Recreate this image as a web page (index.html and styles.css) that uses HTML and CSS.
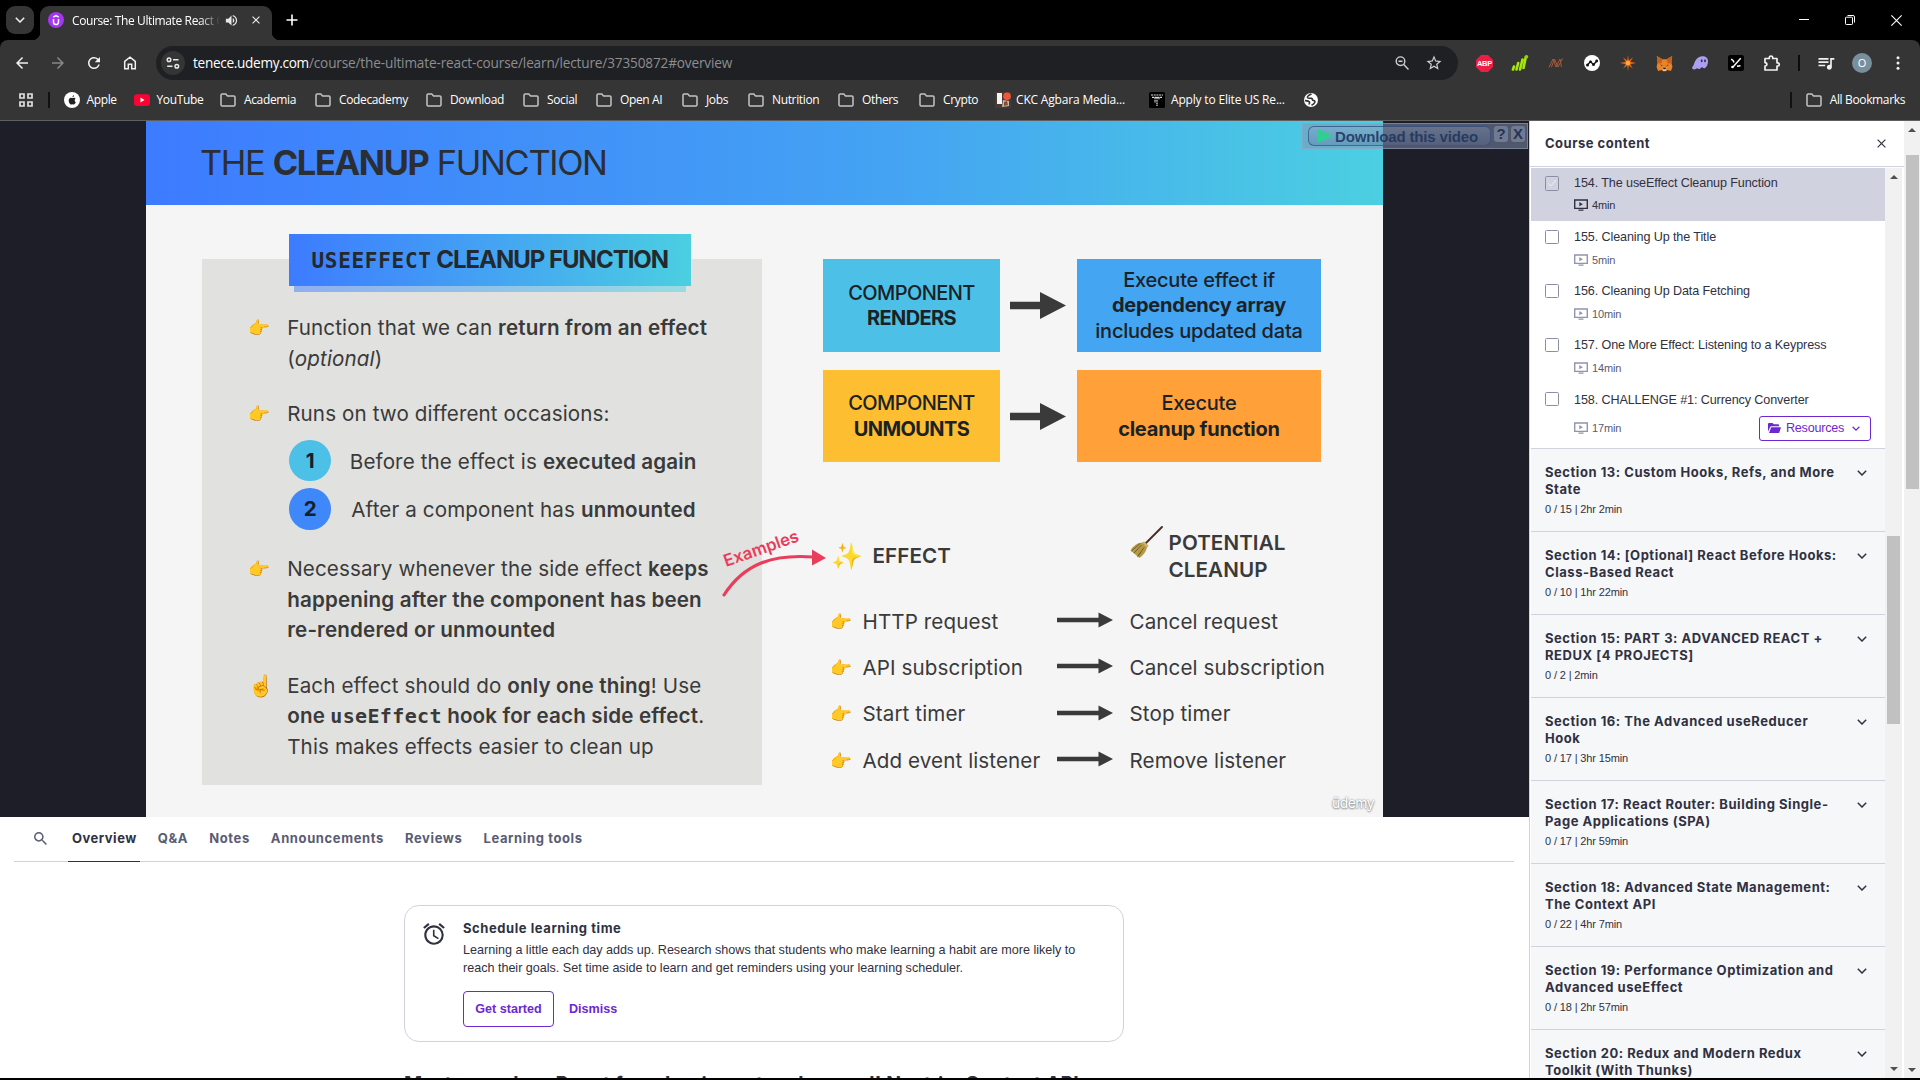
FILE: index.html
```html
<!DOCTYPE html>
<html lang="en">
<head>
<meta charset="utf-8">
<title>Course: The Ultimate React Course</title>
<link rel="stylesheet" href="styles.css">
</head>
<body>
<svg class="defs" aria-hidden="true">
  <symbol id="folder" viewBox="0 0 16 16"><path d="M1 3.2c0-.7.5-1.2 1.2-1.2h3.6l1.7 1.9h6.3c.7 0 1.2.5 1.2 1.2v7.7c0 .7-.5 1.2-1.2 1.2H2.2c-.7 0-1.2-.5-1.2-1.2z" fill="none" stroke="#c3c3c3" stroke-width="1.5"/></symbol>
  <symbol id="play" viewBox="0 0 14 12"><path d="M.7 1h12.6v8.4H.7zM4.5 11.1h5" fill="none" stroke="currentColor" stroke-width="1.4"/><path d="M5.3 3.1v4.2l3.6-2.1z" fill="currentColor"/></symbol>
  <symbol id="chev" viewBox="0 0 10 6"><path d="M.8.8L5 5 9.200.8" fill="none" stroke="currentColor" stroke-width="1.5"/></symbol>
  <symbol id="block-arrow" viewBox="0 0 56 27"><path d="M0 9.700h30V0l26 13.500L30 27v-9.700H0z" fill="#3a3a3a"/></symbol>
  <symbol id="thin-arrow" viewBox="0 0 56 16"><path d="M0 5.700h41.500V.5L56 8 41.500 15.500v-5.200H0z" fill="#3a3a3a"/></symbol>
  <symbol id="close" viewBox="0 0 10 10"><path d="M.7.7l8.600 8.600M9.300.7L.7 9.300" fill="none" stroke="currentColor" stroke-width="1.300"/></symbol>
</svg>

<header class="tabstrip">
  <button class="tab-search"><svg width="10" height="6"><use href="#chev"/></svg></button>
  <div class="tab">
    <svg class="favicon" viewBox="0 0 16 16" width="16" height="16"><circle cx="8" cy="8" r="8" fill="#a435f0"/><path d="M5.500 7v3.100a2.500 2.500 0 0 0 5 0V7M5.300 5.200L8 3.600l2.700 1.600" fill="none" stroke="#fff" stroke-width="1.500"/></svg>
    <span class="tab-title">Course: The Ultimate React C</span>
    <svg class="speaker" viewBox="0 0 24 24" width="15" height="15"><path fill="#e8e8e8" d="M3 9v6h4l5 5V4L7 9H3zm13.500 3c0-1.770-1.020-3.290-2.500-4.030v8.050c1.480-.73 2.500-2.250 2.500-4.020zM14 3.230v2.060c2.890.86 5 3.540 5 6.710s-2.110 5.850-5 6.710v2.060c4.010-.91 7-4.490 7-8.770s-2.990-7.860-7-8.770z"/></svg>
    <svg class="tab-close" width="8" height="8"><use href="#close"/></svg>
  </div>
  <svg class="plus" viewBox="0 0 12 12" width="12" height="12"><path d="M6 .5v11M.5 6h11" stroke="#fff" stroke-width="1.600"/></svg>
  <div class="win">
    <svg viewBox="0 0 10 10" width="10" height="10"><path d="M0 4.500h10" stroke="#fff"/></svg>
    <svg viewBox="0 0 10 10" width="10" height="10"><path d="M.5 3a.8.8 0 0 1 .8-.8h5.400a.8.8 0 0 1 .8.8v5.700a.8.8 0 0 1-.8.8H1.300a.8.8 0 0 1-.8-.8zM2.500.5h5.500a1.500 1.500 0 0 1 1.500 1.500v5.500" fill="none" stroke="#fff"/></svg>
    <svg viewBox="0 0 10 10" width="11" height="11"><path d="M.3.3l9.400 9.400M9.700.3L.3 9.700" stroke="#fff"/></svg>
  </div>
</header>

<nav class="toolbar">
  <div class="cells">
    <i><svg viewBox="0 0 24 24" width="18" height="18"><path fill="#f1f1f1" d="M20 11H7.830l5.590-5.590L12 4l-8 8 8 8 1.410-1.410L7.830 13H20v-2z"/></svg></i>
    <i><svg viewBox="0 0 24 24" width="18" height="18"><path fill="#868686" d="M12 4l-1.410 1.410L16.170 11H4v2h12.170l-5.580 5.590L12 20l8-8z"/></svg></i>
    <i><svg viewBox="0 0 24 24" width="18" height="18"><path fill="#f1f1f1" d="M17.650 6.350A7.958 7.958 0 0 0 12 4c-4.420 0-7.990 3.580-7.990 8s3.570 8 7.990 8c3.730 0 6.840-2.550 7.730-6h-2.080A5.990 5.990 0 0 1 12 18c-3.310 0-6-2.690-6-6s2.690-6 6-6c1.660 0 3.140.69 4.220 1.780L13 11h7V4l-2.350 2.350z"/></svg></i>
    <i><svg viewBox="0 0 16 16" width="16" height="16"><path d="M2.700 6.300L8 2.200l5.300 4.100v7.500h-3.600V9.300H6.300v4.500H2.700z" fill="none" stroke="#f1f1f1" stroke-width="1.500"/></svg></i>
  </div>
  <div class="address">
    <span class="site"><svg viewBox="0 0 14 12" width="14" height="12"><g fill="none" stroke="#e8e8e8" stroke-width="1.500"><circle cx="3" cy="2.700" r="1.800"/><path d="M7 2.700h5.500M1.200 9.300h5.300"/><circle cx="10.800" cy="9.300" r="1.800"/></g></svg></span>
    <span class="url"><b>tenece.udemy.com</b><span>/course/the-ultimate-react-course/learn/lecture/37350872#overview</span></span>
    <svg class="mag" viewBox="0 0 16 16" width="16" height="16"><g fill="none" stroke="#cfcfcf" stroke-width="1.400"><circle cx="6.500" cy="6.200" r="4.300"/><path d="M9.700 9.500l4.800 4.900M4.500 6.200h4"/></g></svg>
    <svg viewBox="0 0 24 24" width="18" height="18"><path fill="#cfcfcf" d="M22 9.240l-7.190-.62L12 2 9.190 8.630 2 9.240l5.460 4.730L5.820 21 12 17.270 18.180 21l-1.630-7.030L22 9.240zM12 15.400l-3.760 2.270 1-4.280-3.320-2.880 4.380-.38L12 6.100l1.710 4.040 4.380.38-3.320 2.880 1 4.280L12 15.400z"/></svg>
  </div>
  <div class="cells ext">
    <i><svg viewBox="0 0 17 17" width="17" height="17"><path d="M5 0h7l5 5v7l-5 5H5l-5-5V5z" fill="#ed1e45"/><text x="8.500" y="11.300" text-anchor="middle">ABP</text></svg></i>
    <i><svg viewBox="0 0 18 18" width="18" height="18"><path d="M2 15.500l1-3M5.500 15.500l1.700-6.500M9 15.500l2.500-10M12.500 14l2.300-11" stroke="#a6e80c" stroke-width="2.600" stroke-linecap="round"/><circle cx="15.500" cy="2.700" r="1.800" fill="#8fd400"/></svg></i>
    <i><svg viewBox="0 0 16 16" width="16" height="16"><path d="M1 12.500L5 4l3 8 4-8 1.500 8M3.500 12L6.500 4l3.500 8 4.500-8.500" fill="none" stroke="#a8583a" stroke-width="1"/></svg></i>
    <i><svg viewBox="0 0 16 16" width="16" height="16"><circle cx="8" cy="8" r="8" fill="#fff"/><path d="M3.500 10l3-3.500 3 3.200 3.200-3.700" fill="none" stroke="#111" stroke-width="1.300"/><g fill="#111"><circle cx="3.500" cy="10" r="1.500"/><circle cx="6.500" cy="6.700" r="1.300"/><circle cx="9.500" cy="9.700" r="1.400"/><circle cx="12.700" cy="6" r="1.400"/></g></svg></i>
    <i><svg viewBox="0 0 16 16" width="16" height="16"><path d="M8 0l.8 5.500 4.300-3.200L10.300 6.800 16 8l-5.700 1.200 2.600 4.400L8.800 10.500 8 16l-.8-5.500-4.100 3.100 2.600-4.400L0 8l5.700-1.200-2.800-4.500L7.200 5.500z" fill="#e5641c"/><circle cx="8" cy="8" r="2.300" fill="#ffb030"/></svg></i>
    <i><svg viewBox="0 0 16 16" width="17" height="17"><path d="M.8 1l5.200 3h4l5.200-3-.6 6.700.9 3.300-1.400 4-3.600-1-1 1.300h-3L5.500 14l-3.600 1L.5 11l.9-3.300z" fill="#e8832a"/><path d="M.8 1l5.200 3-1 4-3.600-.3zM15.200 1L10 4l1 4 3.600-.3z" fill="#c65f1b"/><path d="M4 9l2 .7-.3 1zM12 9l-2 .7.300 1z" fill="#2b2b35"/><path d="M6.300 12.600h3.400l-.3 2.300H6.600z" fill="#d9d9de"/><path d="M7 12h2l.3 1.500H6.700z" fill="#222"/></svg></i>
    <i><svg viewBox="0 0 16 16" width="16" height="16"><path d="M0 12.500C1.500 11 2 8.500 3.200 6 4.700 2.800 7.500 1.200 10.800 1.200c3.400 0 5.200 2.100 5.200 5.200 0 3.700-2 6.800-4 6.800-1 0-1-.9-1.900-.9-1.100 0-1.500 1.700-3.100 1.700-1 0-1-.8-1.800-.8-.9 0-1.600 1.200-3 1.200C.9 14.400 0 13.500 0 12.500z" fill="#ab9ff2"/><ellipse cx="9.700" cy="5.700" rx=".9" ry="1.500" fill="#353045"/><ellipse cx="13" cy="5.700" rx=".9" ry="1.500" fill="#353045"/></svg></i>
    <i><svg viewBox="0 0 16 16" width="16" height="16"><rect width="16" height="16" rx="2.500" fill="#000"/><path d="M3 4.200c2 .3 2.500 1.500 3 3.300M12.700 3.300L5 12M9 11.200l3.500-.4" stroke="#fff" stroke-width="1.400" fill="none"/><circle cx="4.500" cy="12" r="1.300" fill="#fff"/></svg></i>
    <i><svg viewBox="0 0 18 18" width="18" height="18"><path d="M2 4.500h4.300v-.8a1.700 1.700 0 0 1 3.400 0v.8H14v4.300h.7a1.600 1.600 0 0 1 0 3.200H14v4H2v-4c2.500 0 2.500-3.400 0-3.400z" fill="none" stroke="#f1f1f1" stroke-width="1.700" stroke-linejoin="round"/></svg></i>
    <i class="bar"></i>
    <i><svg viewBox="0 0 24 24" width="20" height="20"><path fill="#f1f1f1" d="M15 6H3v2h12V6zm0 4H3v2h12v-2zM3 16h8v-2H3v2zM17 6v8.180c-.31-.11-.65-.18-1-.18-1.660 0-3 1.340-3 3s1.340 3 3 3 3-1.340 3-3V8h3V6h-5z"/></svg></i>
    <i><span class="avatar">O</span></i>
    <i><svg viewBox="0 0 4 16" width="4" height="16" fill="#f1f1f1"><circle cx="2" cy="2.800" r="1.500"/><circle cx="2" cy="8" r="1.500"/><circle cx="2" cy="13.200" r="1.500"/></svg></i>
  </div>
</nav>

<nav class="bookmarks">
  <svg class="apps" viewBox="0 0 14 14" width="14" height="14"><path d="M1 1h4v4H1zM9 1h4v4H9zM1 9h4v4H1zM9 9h4v4H9z" fill="none" stroke="#e0e0e0" stroke-width="1.700"/></svg>
  <span class="sep"></span>
  <ul class="marks">
    <li class="first"><svg viewBox="0 0 16 16"><circle cx="8" cy="8" r="8" fill="#fff"/><path d="M10.700 8.100c0-1 .8-1.500.9-1.600-.5-.7-1.200-.8-1.500-.8-.7-.1-1.200.4-1.600.4-.3 0-.8-.4-1.400-.4C6 5.700 4.700 6.600 4.700 8.500c0 1.800 1.300 4 2.300 4 .5 0 .8-.3 1.400-.3.600 0 .8.3 1.400.3.900 0 1.700-1.600 2-2.400-.9-.4-1.100-1.200-1.100-2zM9.500 4.800c.4-.5.500-1 .5-1.500-.6 0-1.500.6-1.500 1.900.4 0 .8-.1 1-.4z" fill="#222"/></svg>Apple</li>
    <li class="first"><svg viewBox="0 0 16 16"><rect y="2.300" width="16" height="11.600" rx="3" fill="#f03"/><path d="M6.500 5.500v5l4-2.500z" fill="#fff"/></svg>YouTube</li>
    <li><svg><use href="#folder"/></svg>Academia</li>
    <li><svg><use href="#folder"/></svg>Codecademy</li>
    <li><svg><use href="#folder"/></svg>Download</li>
    <li><svg><use href="#folder"/></svg>Social</li>
    <li><svg><use href="#folder"/></svg>Open AI</li>
    <li><svg><use href="#folder"/></svg>Jobs</li>
    <li><svg><use href="#folder"/></svg>Nutrition</li>
    <li><svg><use href="#folder"/></svg>Others</li>
    <li><svg><use href="#folder"/></svg>Crypto</li>
    <li class="tight"><svg viewBox="0 0 16 16"><path d="M0 0h16v16H0z" fill="#4a3a34"/><path d="M2 1h5v11H2z" fill="#f3f3f3"/><path d="M8 8l6 1v5l-7 1z" fill="#c9b8a8"/><path d="M9 10l3-1 1 4-4 1z" fill="#8a4a30"/><circle cx="12" cy="4.300" r="3.800" fill="#f4533c"/></svg>CKC Agbara Media...</li>
    <li class="tight"><svg viewBox="0 0 16 16"><rect width="16" height="16" rx="1.500" fill="#000"/><path d="M2 3h12M3 5.300h10M8 5v9M10 5v3M6 5v6" stroke="#ddd" stroke-width="1.200" stroke-dasharray="2 .7"/></svg>Apply to Elite US Re...</li>
    <li><svg viewBox="0 0 16 16"><circle cx="8" cy="8" r="7" fill="#fff"/><path d="M8.500 2C6.500 3 4 4 4.500 5.500c.6 1.300 2.500.5 4 .8 1.200.5.5 2 2 2.200 1.300.2 1.700.7 1.200 2-.5 1.200-1.700 2-3.200 2.700M2 8.500c1.500.2 3.500.3 4.300 1.300.6 1-.3 1.700.2 2.700" fill="none" stroke="#353535" stroke-width="1.700"/></svg></li>
  </ul>
  <span class="sep"></span>
  <span class="all"><svg width="16" height="16"><use href="#folder"/></svg>All Bookmarks</span>
</nav>

<main class="page">
  <div class="left">
    <section class="video">
      <div class="slide">
        <h1>THE <b>CLEANUP</b> FUNCTION</h1>
        <div class="slide-body">
          <div class="panel">
            <h2><code>USEEFFECT</code> CLEANUP FUNCTION</h2>
            <ul class="points">
              <li><i>👉</i><p>Function that we can <b>return from an effect</b><br>(<em>optional</em>)</p></li>
              <li><i>👉</i><div><p>Runs on two different occasions:</p>
                <ol>
                  <li><span class="num cyan">1</span><p>Before the effect is <b>executed again</b></p></li>
                  <li><span class="num blue">2</span><p class="in2">After a component has <b>unmounted</b></p></li>
                </ol></div></li>
              <li><i>👉</i><p>Necessary whenever the side effect <b>keeps<br>happening after the component has been<br>re-rendered or unmounted</b></p></li>
              <li><i class="up">☝️</i><p>Each effect should do <b>only one thing</b>! Use<br><b>one <code>useEffect</code> hook for each side effect</b>.<br>This makes effects easier to clean up</p></li>
            </ul>
          </div>
          <div class="right">
            <div class="flow">
              <div class="box cyan"><span class="caps">COMPONENT<br><b>RENDERS</b></span></div>
              <svg class="ba" width="56" height="27"><use href="#block-arrow"/></svg>
              <div class="box sky"><span>Execute effect if<br><b>dependency array</b><br>includes updated data</span></div>
              <div class="box yellow"><span class="caps">COMPONENT<br><b>UNMOUNTS</b></span></div>
              <svg class="ba" width="56" height="27"><use href="#block-arrow"/></svg>
              <div class="box orange"><span>Execute<br><b>cleanup function</b></span></div>
            </div>
            <div class="pairs">
              <h3 class="effect"><i>✨</i>EFFECT</h3><span></span>
              <h3 class="cleanup"><svg viewBox="0 0 33 33" width="33" height="33"><path d="M32 1L16 17" stroke="#4b2d20" stroke-width="1.900" stroke-linecap="round"/><path d="M14 15.500l4.500 4.200-1.500 2c-1 4-4 8-7.500 10.300L.5 24.500C3 20 8 16.500 12.500 16.500z" fill="#b59a45"/><path d="M14 15.500l4.500 4.200-1.500 2-4.500-5z" fill="#cdb66a"/><path d="M11.500 19L4 27M14 21.500L8 30M10 17.500L1.500 25M11 26l-3.500 5" stroke="#6f5a22" stroke-width=".9"/></svg><span>POTENTIAL<br>CLEANUP</span></h3>
              <p class="from"><i>👉</i>HTTP request</p><svg width="56" height="16"><use href="#thin-arrow"/></svg><p>Cancel request</p>
              <p class="from"><i>👉</i>API subscription</p><svg width="56" height="16"><use href="#thin-arrow"/></svg><p>Cancel subscription</p>
              <p class="from"><i>👉</i>Start timer</p><svg width="56" height="16"><use href="#thin-arrow"/></svg><p>Stop timer</p>
              <p class="from"><i>👉</i>Add event listener</p><svg width="56" height="16"><use href="#thin-arrow"/></svg><p>Remove listener</p>
            </div>
          </div>
        </div>
        <svg class="note" viewBox="0 0 110 75" width="110" height="75"><path d="M4 71C24 40 52 30 93 33" fill="none" stroke="#ea3d5c" stroke-width="3.200" stroke-linecap="round"/><path d="M92 25.500L106 34 92 41.500z" fill="#ea3d5c"/><text x="6" y="43" transform="rotate(-19.500 6 43)">Examples</text></svg>
        <span class="watermark">ûdemy</span>
      </div>
      <div class="downloader">
        <span class="dl"><svg viewBox="0 0 15 14" width="15" height="14"><path d="M0 0L15 7L0 14Z" fill="#2fcf92"/></svg>Download this video</span><span class="sq">?</span><span class="sq">X</span>
      </div>
    </section>

    <nav class="tabs">
      <svg viewBox="3 3 17.500 17.500" width="13" height="13"><path fill="#595c73" d="M15.500 14h-.79l-.28-.27A6.471 6.471 0 0 0 16 9.500 6.500 6.500 0 1 0 9.500 16c1.610 0 3.090-.59 4.230-1.570l.27.28v.79l5 4.990L20.490 19l-4.990-5zm-6 0C7.010 14 5 11.990 5 9.500S7.010 5 9.500 5 14 7.010 14 9.500 11.990 14 9.500 14z"/></svg>
      <a class="on">Overview</a><a>Q&amp;A</a><a>Notes</a><a>Announcements</a><a>Reviews</a><a>Learning tools</a>
    </nav>

    <section class="card">
      <svg viewBox="0 0 24 24" width="26" height="26"><path fill="#303141" d="M22 5.720l-4.600-3.860-1.290 1.530 4.600 3.860L22 5.720zM7.880 3.390L6.600 1.860 2 5.710l1.290 1.530 4.590-3.850zM12.500 8H11v6l4.750 2.850.75-1.230-4-2.370V8zM12 4c-4.970 0-9 4.030-9 9s4.020 9 9 9a9 9 0 0 0 0-18zm0 16c-3.870 0-7-3.130-7-7s3.130-7 7-7 7 3.130 7 7-3.130 7-7 7z"/></svg>
      <div>
        <h4>Schedule learning time</h4>
        <p>Learning a little each day adds up. Research shows that students who make learning a habit are more likely to<br>reach their goals. Set time aside to learn and get reminders using your learning scheduler.</p>
        <div class="actions"><button>Get started</button><a>Dismiss</a></div>
      </div>
    </section>
    <h2 class="headline">Master modern React from beginner to advanced! Next.js, Context API,</h2>
  </div>

  <aside class="side">
    <div class="side-head"><span>Course content</span><svg width="9" height="9"><use href="#close"/></svg></div>
    <div class="side-main">
      <div class="list">
        <div class="lec current"><span class="check"><svg viewBox="0 0 12 12" width="12" height="12"><path d="M2 6.500l2.700 2.500L10 3" fill="none" stroke="#f0f0f6" stroke-width="1"/></svg></span><div><p>154. The useEffect Cleanup Function</p><small><svg><use href="#play"/></svg>4min</small></div></div>
        <div class="lec"><span class="check"></span><div><p>155. Cleaning Up the Title</p><small><svg><use href="#play"/></svg>5min</small></div></div>
        <div class="lec"><span class="check"></span><div><p>156. Cleaning Up Data Fetching</p><small><svg><use href="#play"/></svg>10min</small></div></div>
        <div class="lec"><span class="check"></span><div><p>157. One More Effect: Listening to a Keypress</p><small><svg><use href="#play"/></svg>14min</small></div></div>
        <div class="lec last"><span class="check"></span><div><p>158. CHALLENGE #1: Currency Converter</p><div class="res-row"><small><svg><use href="#play"/></svg>17min</small><button class="res"><svg viewBox="0 0 13 10" width="13" height="10"><path d="M0 8.500V1a1 1 0 0 1 1-1h3.500l1.300 1.300H10a1 1 0 0 1 1 1v.9H3.200a1 1 0 0 0-.9.600zM1 10l2.200-5.700H13L11.400 9.300a1 1 0 0 1-1 .7z" fill="#6d28d2"/></svg>Resources<svg class="rc" width="8" height="5"><use href="#chev"/></svg></button></div></div></div>

        <div class="sec"><div><h5>Section 13: Custom Hooks, Refs, and More<br>State</h5><small>0 / 15 | 2hr 2min</small></div><svg><use href="#chev"/></svg></div>
        <div class="sec"><div><h5>Section 14: [Optional] React Before Hooks:<br>Class-Based React</h5><small>0 / 10 | 1hr 22min</small></div><svg><use href="#chev"/></svg></div>
        <div class="sec"><div><h5>Section 15: PART 3: ADVANCED REACT +<br>REDUX [4 PROJECTS]</h5><small>0 / 2 | 2min</small></div><svg><use href="#chev"/></svg></div>
        <div class="sec"><div><h5>Section 16: The Advanced useReducer<br>Hook</h5><small>0 / 17 | 3hr 15min</small></div><svg><use href="#chev"/></svg></div>
        <div class="sec"><div><h5>Section 17: React Router: Building Single-<br>Page Applications (SPA)</h5><small>0 / 17 | 2hr 59min</small></div><svg><use href="#chev"/></svg></div>
        <div class="sec"><div><h5>Section 18: Advanced State Management:<br>The Context API</h5><small>0 / 22 | 4hr 7min</small></div><svg><use href="#chev"/></svg></div>
        <div class="sec"><div><h5>Section 19: Performance Optimization and<br>Advanced useEffect</h5><small>0 / 18 | 2hr 57min</small></div><svg><use href="#chev"/></svg></div>
        <div class="sec"><div><h5>Section 20: Redux and Modern Redux<br>Toolkit (With Thunks)</h5></div><svg><use href="#chev"/></svg></div>
      </div>
      <div class="scroll inner"><b class="tri u"></b><span class="thumb"></span><b class="tri d"></b></div>
    </div>
  </aside>
  <div class="scroll outer"><b class="tri u"></b><span class="thumb"></span><b class="tri d"></b></div>
</main>
</body>
</html>
```
FILE: styles.css
```css
* { box-sizing: border-box; margin: 0; padding: 0; }
html, body { width: 1920px; height: 1080px; overflow: hidden; background: #000; }
body { font: 12px "Open Sans", sans-serif; }
ul, ol { list-style: none; }
i { font-style: normal; }
svg { display: block; flex: none; }
button { font: inherit; border: 0; background: none; }
.defs { position: absolute; width: 0; height: 0; }

/* Tab strip */
.tabstrip { height: 40px; display: flex; padding-left: 6px; color: #fff; }
.tab-search { width: 28px; height: 28px; margin-top: 6px; border-radius: 9px; background: #353535; color: #f1f1f1; display: flex; align-items: center; justify-content: center; }
.tab { width: 232px; height: 34px; margin: 6px 0 0 6px; padding: 0 0 6px 8px; border-radius: 9px 9px 0 0; background: #353535; display: flex; align-items: center; position: relative; }
.tab::before, .tab::after { content: ""; position: absolute; bottom: 0; width: 8px; height: 8px; }
.tab::before { left: -8px; background: radial-gradient(circle at 0 0, transparent 8px, #353535 8.500px); }
.tab::after { right: -8px; background: radial-gradient(circle at 100% 0, transparent 8px, #353535 8.500px); }
.tab-title { width: 148px; margin-left: 8px; overflow: hidden; white-space: nowrap; letter-spacing: -.38px; -webkit-mask-image: linear-gradient(90deg, #000 128px, transparent 148px); mask-image: linear-gradient(90deg, #000 128px, transparent 148px); }
.speaker { margin-left: 4px; }
.tab-close { margin-left: 13px; color: #f1f1f1; }
.plus { margin: 14px 0 0 14px; }
.win { margin-left: auto; display: flex; align-items: center; gap: 36px; padding-right: 18px; }

/* Toolbar */
.toolbar { height: 46px; background: #353535; border-radius: 8px 8px 0 0; display: flex; align-items: center; padding-left: 4px; }
.cells { display: flex; }
.cells > i { width: 36px; height: 28px; display: flex; align-items: center; justify-content: center; }
.address { width: 1302px; height: 34px; margin-left: 8px; border-radius: 17px; background: #1f2024; display: flex; align-items: center; padding: 0 15px 0 5px; }
.site { width: 24px; height: 24px; border-radius: 50%; background: #353535; display: flex; align-items: center; justify-content: center; }
.url { flex: 1; margin-left: 8px; padding-bottom: 1px; font-size: 13.600px; letter-spacing: -.15px; color: #8d8e90; white-space: nowrap; }
.url b { font-weight: 400; color: #fff; letter-spacing: -.3px; }
.mag { margin-right: 15px; }
.ext { margin-left: 8px; }
.ext > i.bar { width: 18px; }
.ext text { font: 700 7.500px "Liberation Sans", sans-serif; fill: #fff; letter-spacing: -.2px; }
.bar::after { content: ""; width: 2px; height: 16px; background: #0c0c0c; }
.avatar { width: 20px; height: 20px; border-radius: 50%; background: #78909c; color: #fff; font-size: 11px; line-height: 20px; text-align: center; }

/* Bookmarks */
.bookmarks { height: 35px; background: #353535; border-bottom: 1px solid #5f5f5f; color: #fff; display: flex; align-items: center; padding: 0 15px 6px 19px; letter-spacing: -.36px; }
.sep { width: 2px; height: 16px; background: #111; margin: 0 14px 0 15px; }
.marks { flex: 1; display: grid; grid-template-columns: 70px 86px 95px 111px 97px 73px 86px 66px 90px 81px 76px 154px 154px auto; }
.marks li, .all { display: flex; align-items: center; gap: 8px; white-space: nowrap; line-height: 16px; }
.marks li.first { gap: 6.500px; }
.marks svg { width: 16px; height: 16px; }
.marks li.tight { gap: 5px; letter-spacing: -.18px; }
.marks li.tight + .tight { gap: 6px; }

/* Page frame */
.page { height: 957px; display: grid; grid-template-columns: 1529px 375px 16px; background: #fff; overflow: hidden; }
.left { height: 957px; overflow: hidden; }
.video { height: 696px; background: #1d1e27; padding-left: 146px; position: relative; }

/* Slide */
.slide { width: 1237px; height: 696px; background: #f5f5f5; font-family: Inter, sans-serif; color: #3a3a3a; position: relative; overflow: hidden; }
.slide h1 { height: 84px; padding: 0 0 1px 54px; background: linear-gradient(90deg, #3d7bff, #44a3f3 60%, #4bcfe1); font-size: 34.400px; line-height: 83px; font-weight: 400; letter-spacing: -1.340px; color: #2b2e33; white-space: nowrap; }
.slide-body { display: flex; align-items: flex-start; padding: 54px 0 0 56px; }
.panel { width: 560px; height: 526px; background: #e1e1df; }
.panel h2 { width: 402px; height: 52px; margin: -25px 0 0 87px; padding-left: 22.500px; background: linear-gradient(90deg, #3d7bff, #44a3f3 50%, #4bcfe1); font-size: 24px; line-height: 52.500px; letter-spacing: -1.020px; white-space: nowrap; color: #23292d; position: relative; }
.panel h2::after { content: ""; position: absolute; left: 5px; right: 5px; top: 52px; height: 6px; background: linear-gradient(90deg, #8fb0ef, #92cbe6 70%, #9adbe2); }
.panel h2 code { font: 700 21px "DejaVu Sans Mono", monospace; letter-spacing: .7px; }
.points { margin: 27.400px 0 0 46px; font-size: 20.600px; line-height: 30.400px; letter-spacing: .12px; white-space: nowrap; }
.points > li { display: flex; margin-bottom: 25.200px; }
.points b { font-weight: 600; letter-spacing: .15px; }
.points > li > i, .from i { flex: none; width: 39.200px; font-size: 17.500px; letter-spacing: 0; }
.points > li > i.up { font-size: 21px; }
.points code { font: 700 20px "DejaVu Sans Mono", monospace; letter-spacing: .35px; }
.points ol { margin: 10px 0 0 2.300px; }
.points ol li { display: flex; align-items: center; gap: 18.800px; height: 41.500px; margin-bottom: 7px; }
.points ol li:last-child { margin-bottom: -.5px; }
.points ol p { padding-top: 2.500px; }
.in2 { margin-left: 1.500px; }
.num { width: 41.500px; height: 41.500px; border-radius: 50%; font-weight: 700; line-height: 42px; text-align: center; color: #15202a; }
.cyan { background: #4cc0e6; }
.blue { background: #3f88fa; }
.sky { background: #44a5f2; }
.yellow { background: #fdbe31; }
.orange { background: #ffa138; }
.right { margin-left: 61px; }
.flow { display: grid; grid-template-columns: 177px 77px 244px; grid-auto-rows: 92.700px; row-gap: 18px; }
.ba { align-self: center; margin-left: 10px; }
.box { display: flex; align-items: center; justify-content: center; text-align: center; font-size: 20px; line-height: 25.600px; font-weight: 500; letter-spacing: -.22px; color: #1b2227; padding-top: 1.500px; white-space: nowrap; }
.caps { letter-spacing: -.6px; }
.pairs { margin: 53.500px 0 0 5px; display: grid; grid-template-columns: 229px 72.500px auto; grid-template-rows: 81px repeat(4, 46.400px); align-items: center; font-size: 20.600px; letter-spacing: .1px; white-space: nowrap; }
.pairs p { padding-top: 2px; }
.pairs h3 { font-size: 20.600px; font-weight: 600; display: flex; letter-spacing: .1px; line-height: 27px; }
.effect { align-items: center; margin-top: -2px; }
.effect i { width: 44.500px; font-size: 25.500px; padding-left: 2.500px; }
.cleanup svg { margin: -3px 6px 0 0; }
.from { display: flex; align-items: center; }
.pairs .from i { width: 34.500px; padding-left: 1.500px; }
.note { position: absolute; left: 574px; top: 403px; overflow: visible; }
.note text { font: 600 16.800px Inter, sans-serif; fill: #ea3d5c; }
.watermark { position: absolute; right: 9px; bottom: 6px; font-size: 14px; letter-spacing: -.6px; color: #fff; text-shadow: 0 0 2px #777, 0 1px 2px #999; }

.downloader { position: absolute; left: 1302px; top: 2px; width: 226px; height: 26px; padding: 2px 2px 4px 5px; display: flex; gap: 3px; background: rgba(135, 145, 175, .5); border: 1px solid rgba(150, 170, 200, .5); font: 700 15px "Liberation Sans", sans-serif; }
.dl { width: 184px; height: 20px; border: 1.500px solid rgba(45, 75, 125, .7); border-radius: 6px; display: flex; align-items: center; gap: 2px; padding-left: 9px; letter-spacing: -.15px; white-space: nowrap; color: rgba(28, 50, 90, .85); background: linear-gradient(rgba(150, 175, 215, .3), rgba(90, 115, 165, .3)); }
.sq { width: 14px; height: 16px; border-radius: 3px; background: rgba(140, 155, 190, .5); color: #2a3350; line-height: 16px; text-align: center; }

/* Below the player */
.tabs { height: 45px; margin: 0 15px 0 14px; padding-left: 20px; border-bottom: 1px solid #d1d2e0; display: flex; align-items: flex-start; gap: 14px; font: 700 13px Inter, sans-serif; letter-spacing: .62px; color: #595c73; }
.tabs svg { margin: 15px 7px 0 0; }
.tabs a { height: 45px; padding: 0 3px 0 4px; line-height: 43px; white-space: nowrap; }
.tabs .on { color: #303141; border-bottom: 1px solid #303141; letter-spacing: .5px; }
.card { width: 720px; height: 137px; margin: 43px 0 0 404px; padding: 14px 16px; border: 1px solid #d1d2e0; border-radius: 15px; display: flex; gap: 16px; color: #303141; }
.card > svg { margin-top: 1px; }
.card h4, .headline { font: 700 13px/16px Inter, sans-serif; letter-spacing: .57px; }
.card p { margin-top: 6px; font: 12.600px/17.700px "Liberation Sans", sans-serif; letter-spacing: -.015px; white-space: nowrap; }
.actions { display: flex; align-items: center; gap: 15px; margin-top: 14px; font: 700 12.600px "Liberation Sans", sans-serif; color: #6d28d2; }
.actions button { width: 91px; height: 36px; border: 1px solid #6d28d2; border-radius: 4px; color: inherit; }
.headline { margin: 29.500px 0 0 404px; font-size: 19.500px; line-height: 24px; letter-spacing: .1px; white-space: nowrap; color: #303141; }

/* Sidebar */
.side { border-left: 1px solid #d1d2e0; color: #303141; font: 12.600px "Liberation Sans", sans-serif; display: flex; flex-direction: column; min-height: 0; height: 957px; }
.side-head { height: 46px; margin-bottom: 1px; border-bottom: 1px solid #d1d2e0; display: flex; align-items: center; justify-content: space-between; padding: 0 18px 1px 15px; font: 700 13px Inter, sans-serif; letter-spacing: .5px; }
.side-main { flex: 1; min-height: 0; display: flex; padding-left: 1px; }
.list { width: 354px; overflow: hidden; }
.lec { height: 54.200px; padding: 8px 14px 0; display: flex; gap: 15px; letter-spacing: -.11px; }
.lec.current { height: 53px; margin-bottom: 1px; background: #d1d2e0; }
.lec.last { height: 63px; }
.lec > div { flex: 1; }
.lec p { line-height: 15px; white-space: nowrap; }
.lec small, .sec small { display: flex; align-items: center; gap: 4px; font-size: 11px; line-height: 14px; letter-spacing: -.13px; color: #595c73; }
.lec > div > small { margin-top: 8px; }
.lec.current > div > small { margin-top: 7px; }
.lec small svg { width: 14px; height: 12px; color: #9194ac; }
.lec.current small, .lec.current small svg { color: #303141; }
.check { width: 14px; height: 14px; border: 1px solid #8c8fa3; border-radius: 1.500px; margin-top: -.5px; }
.current .check { height: 15px; }
.res-row { display: flex; align-items: center; justify-content: space-between; margin-top: 8px; }
.res { width: 112px; height: 25px; border: 1px solid #6d28d2; border-radius: 3px; color: #6d28d2; display: flex; align-items: center; padding-left: 8px; gap: 5px; letter-spacing: -.24px; }
.rc { margin-left: 3px; }
.sec { height: 83px; border-top: 1px solid #d1d2e0; background: #f6f7f9; padding: 15px 18px 0 14px; display: flex; justify-content: space-between; }
.sec h5 { font: 700 13px/17.500px Inter, sans-serif; letter-spacing: .54px; white-space: nowrap; }
.sec small { margin-top: 3px; color: #303141; }
.sec > svg { width: 10px; height: 6px; margin-top: 6px; }

.scroll { background: #f1f1f1; display: flex; flex-direction: column; align-items: center; }
.inner { width: 17px; }
.tri { border: 4px solid transparent; }
.u { border-top: 0; border-bottom-color: #505050; }
.d { border-bottom: 0; border-top-color: #505050; margin-top: auto; }
.thumb { width: 13px; background: #c1c1c1; }
.inner .u { margin-top: 7px; }
.inner .thumb { height: 188px; margin-top: 357px; }
.inner .d { margin-bottom: 7px; }
.outer .u { margin-top: 7px; }
.outer .thumb { height: 334px; margin-top: 23px; }
.outer .d { margin-bottom: 6px; }
```
